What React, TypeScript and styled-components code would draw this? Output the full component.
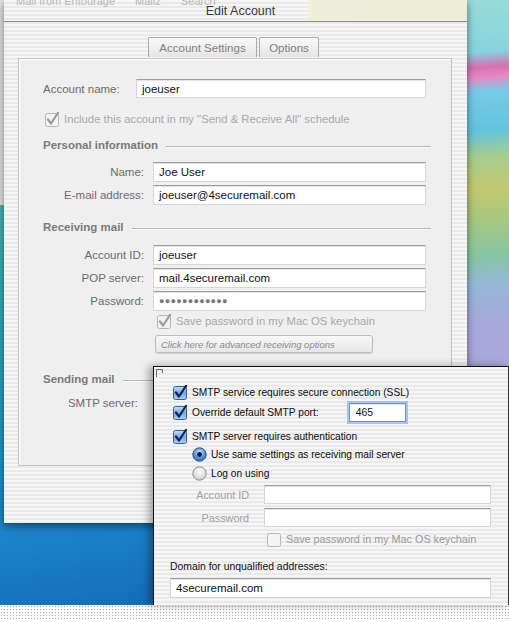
import styled, { createGlobalStyle } from "styled-components"

const GlobalStyle = createGlobalStyle`
  html, body {
    margin: 0;
    padding: 0;
    overflow: hidden;
  }
  body {
    font-family: "Liberation Sans", Arial, sans-serif;
  }
`

const PINSTRIPE = "repeating-linear-gradient(to bottom, #f6f6f6 0px, #f6f6f6 2px, #e9e9e9 2px, #e9e9e9 4px)"

const Stage = styled.div`
  position: relative;
  width: 509px;
  height: 621px;
  display: flex;
  flex-direction: column;
  overflow: hidden;
`

const Desktop = styled.div`
  height: 605px;
  display: grid;
  grid-template-columns: 467px 1fr;
  grid-template-rows: 523px 1fr;
  background:
    linear-gradient(#e4e4e4, #e4e4e4) 0 0 / 4px 205px no-repeat,
    linear-gradient(170deg, #6cc6b0 0%, #38aab8 42%, #2191cf 68%, #1a80c8 80%, #0f5ca8 100%);
`

const Wallpaper = styled.div`
  background: linear-gradient(
    176deg,
    #9adbd6 0%,
    #86d4e0 10%,
    #d870b0 13%,
    #e68ac4 15%,
    #78cae6 17.5%,
    #62c4de 25%,
    #a6cc8c 30%,
    #c2c870 36%,
    #a6c880 42%,
    #86c6a4 49%,
    #96b8d6 54%,
    #a8a8dc 62%,
    #aca6d8 100%
  );
`

const Footer = styled.div`
  flex: 1;
  background-color: #fbfbfb;
  background-image: radial-gradient(#a8a8a8 0.8px, transparent 1px);
  background-size: 3px 3px;
`

const Window = styled.div`
  margin-left: 4px;
  display: flex;
  flex-direction: column;
  background: ${PINSTRIPE};
  box-shadow: 0 3px 8px rgba(0, 0, 0, 0.5);
  position: relative;
  z-index: 1;
`

const TitleBar = styled.div`
  position: relative;
  height: 21px;
  border-bottom: 1px solid #8c8c8c;
  display: flex;
  justify-content: center;
  align-items: center;
  background:
    linear-gradient(to right, transparent 0, transparent 300px, #efeed8 308px, #eeedd6 100%),
    ${PINSTRIPE};
  overflow: hidden;
`

const GhostToolbar = styled.div`
  position: absolute;
  left: 12px;
  top: -5px;
  display: flex;
  gap: 20px;
  font-size: 11px;
  color: #b8b8b8;
`

const Title = styled.span`
  margin-left: 10px;
  font-size: 12.5px;
  color: #3a3a3a;
`

const TabRow = styled.div`
  display: flex;
  justify-content: center;
  gap: 2px;
  margin-top: 15px;
  padding-right: 4px;
`

const Tab = styled.div<{ $width: number }>`
  width: ${(p) => p.$width}px;
  height: 20px;
  box-sizing: border-box;
  border: 1px solid #a9a9a9;
  border-bottom: none;
  border-radius: 2px 2px 0 0;
  background: linear-gradient(to bottom, #fafafa, #e4e4e4);
  display: flex;
  align-items: center;
  justify-content: center;
  font-size: 11.5px;
  color: #808080;
`

const GroupBox = styled.div`
  margin: 1px 15px 0 14px;
  height: 408px;
  box-sizing: border-box;
  border: 1px solid #c4c4c4;
  box-shadow: inset 1px 1px 0 #ffffff;
  background: #efefef;
  padding: 20px 25px 0 24px;
  display: flex;
  flex-direction: column;
`

const WindowFoot = styled.div`
  flex: 1;
`

const Row = styled.div<{ $label: number; $top?: number }>`
  display: grid;
  grid-template-columns: ${(p) => p.$label}px 1fr;
  column-gap: 9px;
  align-items: center;
  margin-top: ${(p) => p.$top ?? 0}px;
`

const Label = styled.span<{ $align?: "left" | "right"; $dim?: boolean }>`
  text-align: ${(p) => p.$align ?? "right"};
  font-size: ${(p) => (p.$dim ? "10.8px" : "11.5px")};
  color: ${(p) => (p.$dim ? "#a2a2a2" : "#6c6c6c")};
  white-space: nowrap;
`

const Field = styled.div<{ $h?: number }>`
  height: ${(p) => p.$h ?? 20}px;
  box-sizing: border-box;
  background: #ffffff;
  border: 1px solid #d6d6d6;
  border-top-color: #9c9c9c;
  box-shadow: inset 0 1px 0 #e4e4e4;
  display: flex;
  align-items: center;
  padding-left: 5px;
  font-size: 11.5px;
  color: #111;
  white-space: nowrap;
  overflow: hidden;
`

const Dots = styled.span`
  font-size: 9px;
  letter-spacing: 0.3px;
  color: #777;
`

const CheckRow = styled.div<{ $top?: number; $indent?: number; $h?: number }>`
  display: flex;
  align-items: center;
  gap: 4px;
  height: ${(p) => p.$h ?? 16}px;
  margin-top: ${(p) => p.$top ?? 0}px;
  margin-left: ${(p) => p.$indent ?? 0}px;
`

const CheckText = styled.span<{ $tone: "dim" | "ink" | "faint" }>`
  font-size: ${(p) =>
    p.$tone === "ink" ? "10.2px" : p.$tone === "dim" ? "10.8px" : "11.3px"};
  color: ${(p) =>
    p.$tone === "ink" ? "#0c0c0c" : p.$tone === "dim" ? "#9a9a9a" : "#a8a8a8"};
  white-space: nowrap;
`

const SectionHead = styled.div<{ $top: number }>`
  display: flex;
  align-items: center;
  gap: 8px;
  height: 14px;
  margin-top: ${(p) => p.$top}px;
  margin-right: -5px;
  font-size: 11.5px;
  font-weight: bold;
  color: #7a7a7a;

  &::after {
    content: "";
    flex: 1;
    height: 0;
    border-top: 1px solid #b4b4b4;
    border-bottom: 1px solid #fbfbfb;
    margin-top: 3px;
  }
`

const AdvancedButton = styled.div`
  margin: 6px 0 0 112px;
  width: 218px;
  height: 18px;
  box-sizing: border-box;
  border: 1px solid #bcbcbc;
  border-radius: 3px;
  background: linear-gradient(to bottom, #f8f8f8, #e6e6e6);
  box-shadow: 0 1px 1px rgba(0, 0, 0, 0.15);
  display: flex;
  align-items: center;
  padding-left: 5px;
  font-size: 9.5px;
  font-style: italic;
  color: #8c8c8c;
`

const Popup = styled.div`
  position: absolute;
  left: 153px;
  top: 366px;
  width: 356px;
  height: 239px;
  box-sizing: border-box;
  border: 1px solid #111;
  border-right-color: #333;
  border-bottom: none;
  background: ${PINSTRIPE};
  box-shadow: -4px 0 8px rgba(0, 0, 0, 0.35);
  z-index: 2;
  padding: 2px 17px 0 16px;
  display: flex;
  flex-direction: column;
`

const Corner = styled.svg`
  display: block;
  margin-left: -14px;
`

const PortField = styled(Field)`
  width: 57px;
  height: 19px;
  margin-left: 26px;
  padding-left: 6px;
  font-size: 10.4px;
  border-color: #6f95c8;
  box-shadow: 0 0 0 2px #a9c4e8, inset 0 1px 0 #e4e4e4;
`

const SubRow = styled.div<{ $top: number }>`
  display: grid;
  grid-template-columns: 79px 1fr;
  column-gap: 15px;
  align-items: center;
  margin-top: ${(p) => p.$top}px;
`

const PlainLabel = styled.div<{ $top: number }>`
  margin-top: ${(p) => p.$top}px;
  height: 14px;
  font-size: 10.4px;
  color: #111;
`

function Checkbox({
  kind,
  checked,
}: {
  kind: "aqua" | "grey" | "off"
  checked: boolean
}) {
  const fill =
    kind === "aqua" ? "url(#aquaBox)" : kind === "grey" ? "#f2f2f2" : "#f4f4f4"
  const edge = kind === "aqua" ? "#3c5f95" : "#b6b6b6"
  const mark = kind === "aqua" ? "#16244a" : "#9c9c9c"
  return (
    <svg width="15" height="15" viewBox="0 0 15 15">
      <defs>
        <linearGradient id="aquaBox" x1="0" y1="0" x2="0" y2="1">
          <stop offset="0" stopColor="#c5ddf7" />
          <stop offset="0.5" stopColor="#73a9e6" />
          <stop offset="1" stopColor="#a9d2fb" />
        </linearGradient>
      </defs>
      <rect x="0.5" y="1.5" width="13" height="13" rx="2" fill={fill} stroke={edge} />
      {checked && (
        <path
          d="M3 7.5 L6 11.5 L13 0.8"
          fill="none"
          stroke={mark}
          strokeWidth="2.2"
          strokeLinecap="round"
          strokeLinejoin="round"
        />
      )}
    </svg>
  )
}

function Radio({ on }: { on: boolean }) {
  return (
    <svg width="15" height="15" viewBox="0 0 15 15">
      <defs>
        <radialGradient id="aquaRadio" cx="0.5" cy="0.35" r="0.6">
          <stop offset="0" stopColor="#d6e8fb" />
          <stop offset="0.6" stopColor="#5f9ae0" />
          <stop offset="1" stopColor="#3a6fb8" />
        </radialGradient>
        <radialGradient id="plainRadio" cx="0.5" cy="0.35" r="0.6">
          <stop offset="0" stopColor="#ffffff" />
          <stop offset="1" stopColor="#d2d2d2" />
        </radialGradient>
      </defs>
      <circle
        cx="7.5"
        cy="7.5"
        r="6.7"
        fill={on ? "url(#aquaRadio)" : "url(#plainRadio)"}
        stroke={on ? "#2f4f82" : "#8e8e8e"}
      />
      {on && <circle cx="7.5" cy="7.5" r="2.4" fill="#0e1c3c" />}
    </svg>
  )
}

export default function App() {
  return (
    <>
      <GlobalStyle />
      <Stage>
        <Desktop>
          <Window>
            <TitleBar>
              <GhostToolbar>
                <span>Mail from Entourage</span>
                <span>Mailz</span>
                <span>Search</span>
              </GhostToolbar>
              <Title>Edit Account</Title>
            </TitleBar>

            <TabRow>
              <Tab $width={109}>Account Settings</Tab>
              <Tab $width={60}>Options</Tab>
            </TabRow>

            <GroupBox>
              <Row $label={84}>
                <Label $align="left">Account name:</Label>
                <Field $h={19}>joeuser</Field>
              </Row>

              <CheckRow $top={13} $indent={2}>
                <Checkbox kind="grey" checked />
                <CheckText $tone="faint">
                  Include this account in my "Send &amp; Receive All" schedule
                </CheckText>
              </CheckRow>

              <SectionHead $top={11}>Personal information</SectionHead>
              <Row $label={101} $top={10}>
                <Label>Name:</Label>
                <Field>Joe User</Field>
              </Row>
              <Row $label={101} $top={3}>
                <Label>E-mail address:</Label>
                <Field>joeuser@4securemail.com</Field>
              </Row>

              <SectionHead $top={15}>Receiving mail</SectionHead>
              <Row $label={101} $top={11}>
                <Label>Account ID:</Label>
                <Field>joeuser</Field>
              </Row>
              <Row $label={101} $top={3}>
                <Label>POP server:</Label>
                <Field>mail.4securemail.com</Field>
              </Row>
              <Row $label={101} $top={3}>
                <Label>Password:</Label>
                <Field>
                  <Dots>●●●●●●●●●●●●</Dots>
                </Field>
              </Row>
              <CheckRow $top={2} $indent={114}>
                <Checkbox kind="grey" checked />
                <CheckText $tone="faint">Save password in my Mac OS keychain</CheckText>
              </CheckRow>
              <AdvancedButton>Click here for advanced receiving options</AdvancedButton>

              <SectionHead $top={19}>Sending mail</SectionHead>
              <Row $label={95} $top={11}>
                <Label>SMTP server:</Label>
                <span />
              </Row>
            </GroupBox>
            <WindowFoot />
          </Window>
          <Wallpaper />
        </Desktop>
        <Footer />

        <Popup>
          <Corner width="8" height="8" viewBox="0 0 8 8">
            <path d="M0.5 8 V0.5 H6.5 V4" fill="none" stroke="#666" />
          </Corner>

          <CheckRow $top={7} $indent={3}>
            <Checkbox kind="aqua" checked />
            <CheckText $tone="ink">SMTP service requires secure connection (SSL)</CheckText>
          </CheckRow>
          <CheckRow $top={2} $indent={3} $h={20}>
            <Checkbox kind="aqua" checked />
            <CheckText $tone="ink">Override default SMTP port:</CheckText>
            <PortField>465</PortField>
          </CheckRow>
          <CheckRow $top={6} $indent={3}>
            <Checkbox kind="aqua" checked />
            <CheckText $tone="ink">SMTP server requires authentication</CheckText>
          </CheckRow>
          <CheckRow $top={2} $indent={22}>
            <Radio on />
            <CheckText $tone="ink">Use same settings as receiving mail server</CheckText>
          </CheckRow>
          <CheckRow $top={3} $indent={22}>
            <Radio on={false} />
            <CheckText $tone="ink">Log on using</CheckText>
          </CheckRow>

          <SubRow $top={4}>
            <Label $dim>Account ID</Label>
            <Field $h={19} />
          </SubRow>
          <SubRow $top={4}>
            <Label $dim>Password</Label>
            <Field $h={19} />
          </SubRow>
          <CheckRow $top={4} $indent={97}>
            <Checkbox kind="off" checked={false} />
            <CheckText $tone="dim">Save password in my Mac OS keychain</CheckText>
          </CheckRow>

          <PlainLabel $top={14}>Domain for unqualified addresses:</PlainLabel>
          <Field $h={20} style={{ marginTop: 3 }}>
            4securemail.com
          </Field>
        </Popup>
      </Stage>
    </>
  )
}
